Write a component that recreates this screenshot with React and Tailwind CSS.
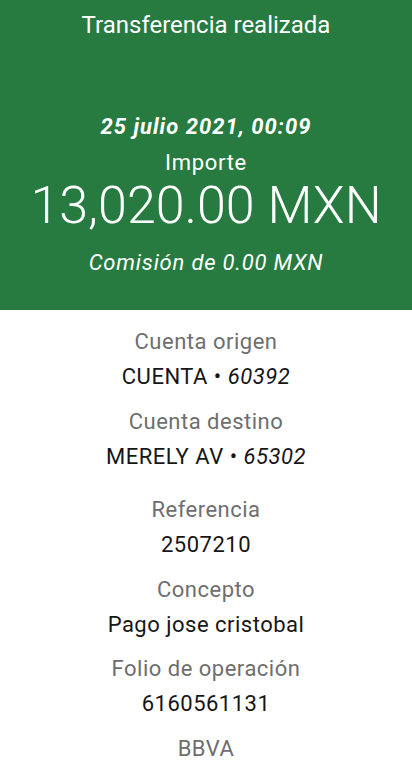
import React from 'react';

const Field = ({ label, children, className = '' }) => (
    <div className={className}>
        <p className="text-[22px] leading-[28px] tracking-[0.5px] text-[#6e6e6e]">{label}</p>
        <p className="mt-[7px] text-[22px] leading-[28px] tracking-[0.5px] text-[#161616]">{children}</p>
    </div>
);

export default function App() {
    return (
        <div className="w-[412px] h-[770px] overflow-hidden bg-white text-center font-['Roboto',sans-serif]">
            <div className="h-[310px] bg-[#277b40] text-white flex flex-col items-center">
                <h1 className="mt-[11px] text-[24px] leading-[28px]">Transferencia realizada</h1>
                <p className="mt-[74px] text-[22px] leading-[28px] font-bold italic tracking-[1px]">25 julio 2021, 00:09</p>
                <p className="mt-[8px] text-[22px] leading-[28px] tracking-[0.7px]">Importe</p>
                <p className="mt-[1px] text-[52px] leading-[56px] font-light">13,020.00 MXN</p>
                <p className="mt-[15px] text-[22px] leading-[28px] italic tracking-[0.8px]">Comisión de 0.00 MXN</p>
            </div>

            <div className="flex flex-col items-center pt-[18px]">
                <Field label="Cuenta origen">
                    CUENTA • <span className="italic">60392</span>
                </Field>
                <Field label="Cuenta destino" className="mt-[17px]">
                    MERELY AV • <span className="italic">65302</span>
                </Field>
                <Field label="Referencia" className="mt-[25px]">2507210</Field>
                <Field label="Concepto" className="mt-[17px]">Pago jose cristobal</Field>
                <Field label="Folio de operación" className="mt-[16px]">6160561131</Field>
                <p className="mt-[17px] text-[22px] leading-[28px] tracking-[0.5px] text-[#6e6e6e]">BBVA</p>
            </div>
        </div>
    );
}
